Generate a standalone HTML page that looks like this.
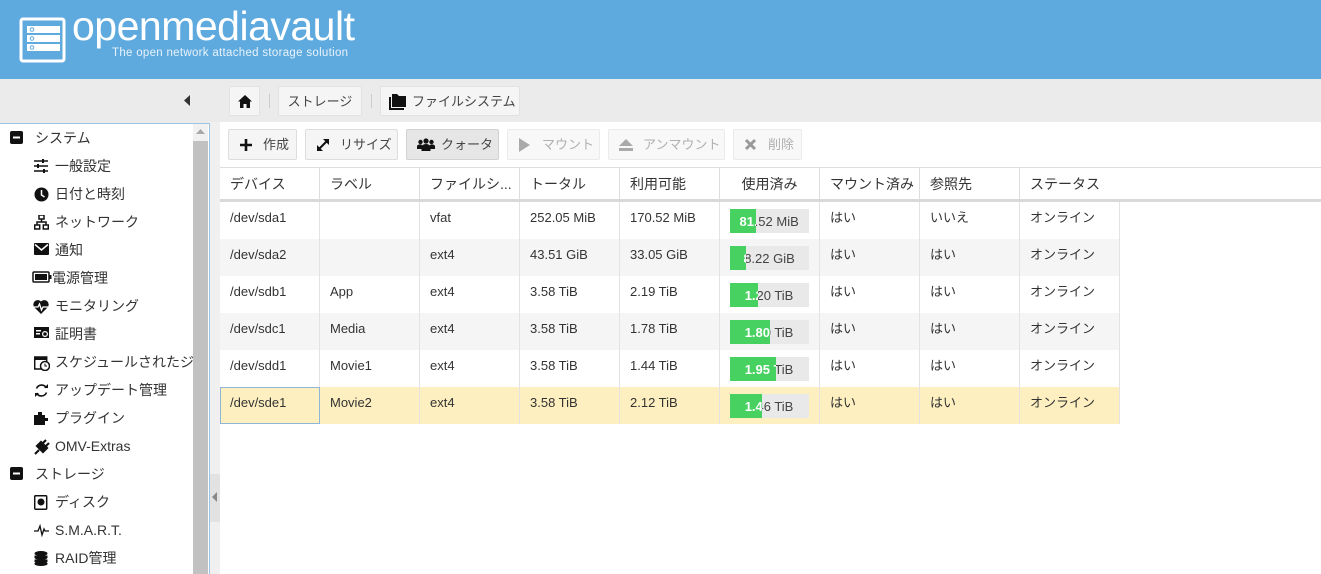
<!DOCTYPE html>
<html><head><meta charset="utf-8"><style>
*{box-sizing:border-box;margin:0;padding:0}
body{width:1321px;height:574px;overflow:hidden;background:#ebebeb;font-family:"Liberation Sans","Noto Sans CJK JP",sans-serif;font-size:13px;color:#333;position:relative}
.hdr{position:absolute;left:0;top:0;width:1321px;height:79px;background:#5eaade}
.title{position:absolute;left:72px;top:3px;color:#fff;font-size:41px;font-family:"Liberation Sans",sans-serif;white-space:nowrap;letter-spacing:-0.5px}
.sub{position:absolute;left:112px;top:47px;color:#e8f3fb;font-size:11.5px;font-family:"Liberation Sans",sans-serif;white-space:nowrap;letter-spacing:0.3px}
.side{position:absolute;left:0;top:123px;width:210px;height:451px;background:#fff;border-right:1px solid #9cc3e0;border-top:1px solid #9cc3e0}
.sb{position:absolute;left:193px;top:124px;width:15px;height:450px;background:#f1f1f1}
.sb i{position:absolute;left:0;top:17px;width:15px;height:433px;background:#c1c1c1}
.split{position:absolute;left:210px;top:122px;width:10px;height:452px;background:#f0f0f0}
.split i{position:absolute;left:0;top:352px;width:10px;height:48px;background:#e2e2e2}
.it{position:absolute;left:0;height:28px;line-height:28px;font-size:14px;color:#333;white-space:nowrap;width:193px;overflow:hidden}
.it svg{position:absolute;top:7px}
.main{position:absolute;left:220px;top:122px;width:1101px;height:452px;background:#fff}
.bc{position:absolute;top:86px;height:30px;line-height:30px;background:#f5f5f5;border:1px solid #e2e2e2;border-radius:2px;font-size:13px;color:#444;white-space:nowrap;text-align:center}
.sep{position:absolute;top:94px;width:1px;height:14px;background:#ccc}
.tb{position:absolute;top:129px;height:31px;line-height:29px;background:#f5f5f5;border:1px solid #ddd;border-radius:2px;font-size:13px;color:#444;padding-left:34px;white-space:nowrap}
.tb.dis{color:#b0b0b0;background:#f8f8f8;border-color:#ebebeb}
.tb svg{position:absolute;left:10px;top:8px}
.th{position:absolute;top:168px;height:32px;line-height:32px;font-size:14px;color:#333;padding-left:10px;border-right:1px solid #ddd;white-space:nowrap;overflow:hidden}
.hline{position:absolute;left:220px;top:167px;width:1101px;height:1px;background:#ddd}
.hline2{position:absolute;left:220px;top:199px;width:1101px;height:3px;background:#d9d9d9}
.row{position:absolute;left:220px;width:900px;height:37px}
.c{position:absolute;top:0;height:37px;line-height:32px;padding-left:10px;font-size:13px;color:#333;border-right:1px solid #e3e3e3;width:100px;white-space:nowrap}
.bar{position:absolute;left:10px;top:7px;width:79px;height:24px;background:#e9e9e9}
.bar span{position:absolute;left:0;top:0;width:79px;text-align:center;line-height:26px;font-size:13px;color:#444}
.bar b{position:absolute;left:0;top:0;height:24px;background:#46d160;overflow:hidden}
.bar b span{color:#fff;font-weight:bold}
</style></head><body>
<div class="hdr">
<svg style="position:absolute;left:19px;top:17px" width="48" height="46" viewBox="0 0 48 46"><rect x="2" y="2" width="43" height="42" rx="2" fill="none" stroke="#fff" stroke-width="3"/><rect x="8" y="9" width="33" height="7" fill="#fff"/><rect x="8" y="18" width="33" height="7" fill="#fff"/><rect x="8" y="27" width="33" height="7" fill="#fff"/><circle cx="13" cy="12.5" r="1.8" fill="none" stroke="#5eaade"/><circle cx="13" cy="21.5" r="1.8" fill="none" stroke="#5eaade"/><circle cx="13" cy="30.5" r="1.8" fill="none" stroke="#5eaade"/></svg>
<div class="title">openmediavault</div>
<div class="sub">The open network attached storage solution</div>
</div>
<svg style="position:absolute;left:184px;top:95px" width="8" height="12"><path d="M6 0V11L0 5.5Z" fill="#333"/></svg>
<div class="bc" style="left:229px;width:31px"><svg style="position:absolute;left:8px;top:8px" width="14" height="13" viewBox="0 0 14 13"><path d="M7 0L0 6.5H2V13H5.5V9H8.5V13H12V6.5H14Z" fill="#111"/></svg></div>
<div class="sep" style="left:269px"></div>
<div class="bc" style="left:278px;width:84px">ストレージ</div>
<div class="sep" style="left:371px"></div>
<div class="bc" style="left:380px;width:140px;text-align:left;padding-left:31px"><svg style="position:absolute;left:8px;top:7px" width="18" height="16" viewBox="0 0 18 16"><path d="M0 3H2V14H15V16H0Z M3 0H8L10 2H17V13H3Z" fill="#111"/></svg>ファイルシステム</div>
<div class="side"></div>
<div class="sb"><svg style="position:absolute;left:3px;top:5px" width="9" height="6"><path d="M4.5 0L9 5H0Z" fill="#a8a8a8"/></svg><i></i></div>
<div class="split"><i></i><svg style="position:absolute;left:2px;top:370px" width="6" height="10"><path d="M5 0V10L0 5Z" fill="#888"/></svg></div>

<div class="it" style="top:124px;padding-left:35px"><svg style="left:10px" width="13" height="13"><rect x="0" y="0" width="13" height="13" rx="2" fill="#111"/><rect x="3" y="5.5" width="7" height="2" fill="#fff"/></svg>システム</div>
<div class="it" style="top:152px;padding-left:55px"><svg style="left:34px" width="14" height="14"><path d="M0 2H14M0 7H14M0 12H14" stroke="#111" stroke-width="1.5"/><rect x="8" y="0" width="2" height="4" fill="#111"/><rect x="3" y="5" width="2" height="4" fill="#111"/><rect x="9" y="10" width="2" height="4" fill="#111"/></svg>一般設定</div>
<div class="it" style="top:180px;padding-left:55px"><svg style="left:34px" width="15" height="15"><circle cx="7.5" cy="7.5" r="7" fill="#111"/><path d="M7.5 3V8L10.5 10" stroke="#fff" stroke-width="1.5" fill="none"/></svg>日付と時刻</div>
<div class="it" style="top:208px;padding-left:55px"><svg style="left:34px" width="15" height="15"><rect x="5" y="0" width="5" height="4" fill="none" stroke="#111" stroke-width="1.5"/><rect x="0.7" y="10" width="5" height="4" fill="none" stroke="#111" stroke-width="1.5"/><rect x="9.3" y="10" width="5" height="4" fill="none" stroke="#111" stroke-width="1.5"/><path d="M7.5 4V7M3 10V7H12V10" stroke="#111" stroke-width="1.5" fill="none"/></svg>ネットワーク</div>
<div class="it" style="top:236px;padding-left:55px"><svg style="left:34px" width="15" height="13"><rect x="0" y="0" width="15" height="12" rx="1" fill="#111"/><path d="M1 1.5L7.5 7L14 1.5" stroke="#fff" stroke-width="1.5" fill="none"/></svg>通知</div>
<div class="it" style="top:264px;padding-left:52px"><svg style="left:32px" width="20" height="12"><rect x="1" y="1" width="16" height="10" rx="1" fill="none" stroke="#111" stroke-width="1.5"/><rect x="3" y="3" width="12" height="6" fill="#111"/><rect x="17.5" y="4" width="2" height="4" fill="#111"/></svg>電源管理</div>
<div class="it" style="top:292px;padding-left:55px"><svg style="left:33px" width="16" height="15" viewBox="0 0 16 15"><path d="M8 15L1.5 8.5A4 4 0 0 1 8 2.5A4 4 0 0 1 14.5 8.5Z" fill="#111"/><path d="M1 8H5L6.5 5L8.5 11L10 8H15" stroke="#fff" stroke-width="1.3" fill="none"/></svg>モニタリング</div>
<div class="it" style="top:320px;padding-left:55px"><svg style="left:34px" width="16" height="14"><rect x="0" y="0" width="15" height="11" fill="#111"/><rect x="2" y="3" width="5" height="1.5" fill="#fff"/><rect x="2" y="6" width="4" height="1.5" fill="#fff"/><circle cx="11" cy="7" r="3" fill="#fff"/><circle cx="11" cy="7" r="1.8" fill="#111"/></svg>証明書</div>
<div class="it" style="top:348px;padding-left:55px"><svg style="left:34px" width="16" height="16"><rect x="0.7" y="2" width="12" height="12" fill="none" stroke="#111" stroke-width="1.5"/><rect x="0" y="2" width="13" height="3" fill="#111"/><circle cx="11" cy="11" r="4.5" fill="#fff" stroke="#111" stroke-width="1.5"/><path d="M11 8.5V11H13" stroke="#111" fill="none"/></svg>スケジュールされたジョブ</div>
<div class="it" style="top:376px;padding-left:55px"><svg style="left:34px" width="15" height="15"><path d="M12.5 5A5.5 5.5 0 0 0 2.5 5.5M2.5 10A5.5 5.5 0 0 0 12.5 9.5" stroke="#111" stroke-width="1.6" fill="none"/><path d="M10 5H14V1Z M5 10H1V14Z" fill="#111"/></svg>アップデート管理</div>
<div class="it" style="top:404px;padding-left:55px"><svg style="left:34px" width="16" height="15"><path d="M0 4H4V1H8V4H11V7H14V10H11V14H0Z" fill="#111"/></svg>プラグイン</div>
<div class="it" style="top:432px;padding-left:55px"><svg style="left:33px" width="17" height="17"><path d="M2 15L6 11M8 3L14 9L10 13L4 7Z M10 4L13 1M13 7L16 4" stroke="#111" stroke-width="2.2" fill="#111"/></svg>OMV-Extras</div>
<div class="it" style="top:460px;padding-left:35px"><svg style="left:10px" width="13" height="13"><rect x="0" y="0" width="13" height="13" rx="2" fill="#111"/><rect x="3" y="5.5" width="7" height="2" fill="#fff"/></svg>ストレージ</div>
<div class="it" style="top:488px;padding-left:55px"><svg style="left:34px" width="14" height="15"><rect x="0.7" y="0.7" width="12" height="13.5" rx="1" fill="none" stroke="#111" stroke-width="1.5"/><circle cx="7" cy="7" r="3.5" fill="#111"/></svg>ディスク</div>
<div class="it" style="top:516px;padding-left:55px"><svg style="left:34px" width="15" height="14"><path d="M0 8H4L6 3L8 12L10 6L11 8H15" stroke="#111" stroke-width="1.3" fill="none"/></svg>S.M.A.R.T.</div>
<div class="it" style="top:544px;padding-left:55px"><svg style="left:34px" width="14" height="15"><ellipse cx="7" cy="2.5" rx="6.5" ry="2.5" fill="#111"/><path d="M0.5 4.5V6.5A6.5 2.5 0 0 0 13.5 6.5V4.5M0.5 8.5V10.5A6.5 2.5 0 0 0 13.5 10.5V8.5M0.5 12V13A6.5 2 0 0 0 13.5 13V12" fill="#111"/></svg>RAID管理</div>

<div class="main"></div>
<div class="tb" style="left:228px;width:69px"><svg width="14" height="14"><path d="M7 1V13M1 7H13" stroke="#111" stroke-width="2.6"/></svg>作成</div>
<div class="tb" style="left:305px;width:93px"><svg width="14" height="14"><path d="M2 12L12 2" stroke="#111" stroke-width="2"/><path d="M7 1H13V7Z M1 7V13H7Z" fill="#111"/></svg>リサイズ</div>
<div class="tb" style="left:406px;width:93px;background:#e6e6e6;border-color:#d2d2d2"><svg width="18" height="14"><circle cx="9" cy="3" r="2.6" fill="#111"/><circle cx="3.5" cy="4" r="2.2" fill="#111"/><circle cx="14.5" cy="4" r="2.2" fill="#111"/><path d="M4.5 13V9A4.5 3 0 0 1 13.5 9V13Z M0 11V8A3 2 0 0 1 5 7V11Z M13 7A3 2 0 0 1 18 8V11H13Z" fill="#111"/></svg>クォータ</div>
<div class="tb dis" style="left:507px;width:93px"><svg width="13" height="14"><path d="M1 0V14L12 7Z" fill="#aaa"/></svg>マウント</div>
<div class="tb dis" style="left:608px;width:117px"><svg width="14" height="14"><path d="M7 1L14 8H0Z M0 10H14V13H0Z" fill="#aaa"/></svg>アンマウント</div>
<div class="tb dis" style="left:733px;width:69px"><svg width="13" height="13"><path d="M2 2L11 11M11 2L2 11" stroke="#999" stroke-width="3"/></svg>削除</div>

<div class="hline"></div>
<div class="th" style="left:220px;width:100px">デバイス</div>
<div class="th" style="left:320px;width:100px">ラベル</div>
<div class="th" style="left:420px;width:100px">ファイルシ...</div>
<div class="th" style="left:520px;width:100px">トータル</div>
<div class="th" style="left:620px;width:100px">利用可能</div>
<div class="th" style="left:720px;width:100px;text-align:center;padding:0">使用済み</div>
<div class="th" style="left:820px;width:100px">マウント済み</div>
<div class="th" style="left:920px;width:100px">参照先</div>
<div class="th" style="left:1020px;width:100px;border-right:none">ステータス</div>
<div class="hline2"></div>

<div class="row" style="top:202px;background:#fff"><div class="c" style="left:0">/dev/sda1</div><div class="c" style="left:100px"></div><div class="c" style="left:200px">vfat</div><div class="c" style="left:300px">252.05 MiB</div><div class="c" style="left:400px">170.52 MiB</div><div class="c" style="left:500px"><div class="bar"><span>81.52 MiB</span><b style="width:26px"><span>81.52 MiB</span></b></div></div><div class="c" style="left:600px">はい</div><div class="c" style="left:700px">いいえ</div><div class="c" style="left:800px">オンライン</div></div>
<div class="row" style="top:239px;background:#f5f5f5"><div class="c" style="left:0">/dev/sda2</div><div class="c" style="left:100px"></div><div class="c" style="left:200px">ext4</div><div class="c" style="left:300px">43.51 GiB</div><div class="c" style="left:400px">33.05 GiB</div><div class="c" style="left:500px"><div class="bar"><span>8.22 GiB</span><b style="width:16px"><span>8.22 GiB</span></b></div></div><div class="c" style="left:600px">はい</div><div class="c" style="left:700px">はい</div><div class="c" style="left:800px">オンライン</div></div>
<div class="row" style="top:276px;background:#fff"><div class="c" style="left:0">/dev/sdb1</div><div class="c" style="left:100px">App</div><div class="c" style="left:200px">ext4</div><div class="c" style="left:300px">3.58 TiB</div><div class="c" style="left:400px">2.19 TiB</div><div class="c" style="left:500px"><div class="bar"><span>1.20 TiB</span><b style="width:28px"><span>1.20 TiB</span></b></div></div><div class="c" style="left:600px">はい</div><div class="c" style="left:700px">はい</div><div class="c" style="left:800px">オンライン</div></div>
<div class="row" style="top:313px;background:#f5f5f5"><div class="c" style="left:0">/dev/sdc1</div><div class="c" style="left:100px">Media</div><div class="c" style="left:200px">ext4</div><div class="c" style="left:300px">3.58 TiB</div><div class="c" style="left:400px">1.78 TiB</div><div class="c" style="left:500px"><div class="bar"><span>1.80 TiB</span><b style="width:40px"><span>1.80 TiB</span></b></div></div><div class="c" style="left:600px">はい</div><div class="c" style="left:700px">はい</div><div class="c" style="left:800px">オンライン</div></div>
<div class="row" style="top:350px;background:#fff"><div class="c" style="left:0">/dev/sdd1</div><div class="c" style="left:100px">Movie1</div><div class="c" style="left:200px">ext4</div><div class="c" style="left:300px">3.58 TiB</div><div class="c" style="left:400px">1.44 TiB</div><div class="c" style="left:500px"><div class="bar"><span>1.95 TiB</span><b style="width:46px"><span>1.95 TiB</span></b></div></div><div class="c" style="left:600px">はい</div><div class="c" style="left:700px">はい</div><div class="c" style="left:800px">オンライン</div></div>
<div class="row" style="top:387px;background:#fdefbf"><div class="c" style="left:0;border:1px solid #8fb6d6;padding-left:9px;line-height:30px">/dev/sde1</div><div class="c" style="left:100px">Movie2</div><div class="c" style="left:200px">ext4</div><div class="c" style="left:300px">3.58 TiB</div><div class="c" style="left:400px">2.12 TiB</div><div class="c" style="left:500px"><div class="bar"><span>1.46 TiB</span><b style="width:32px"><span>1.46 TiB</span></b></div></div><div class="c" style="left:600px">はい</div><div class="c" style="left:700px">はい</div><div class="c" style="left:800px">オンライン</div></div>
</body></html>
